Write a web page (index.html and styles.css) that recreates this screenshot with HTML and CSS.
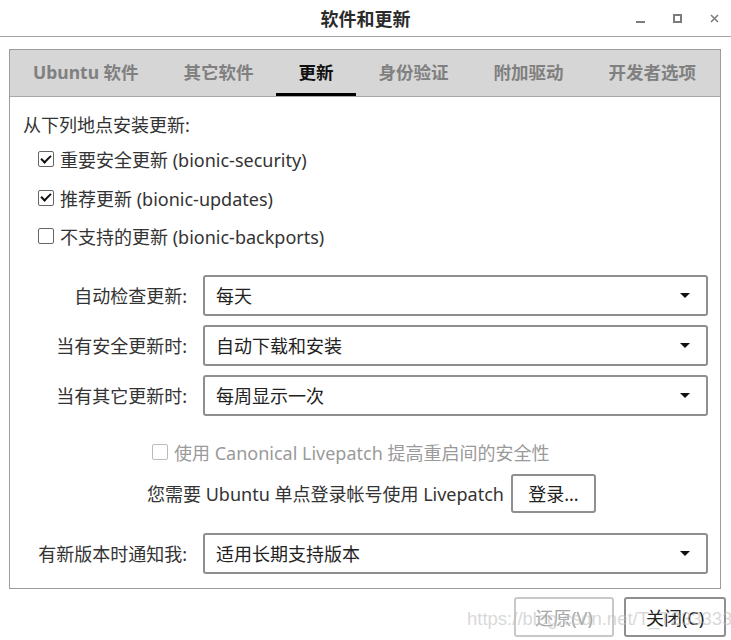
FILE: index.html
```html
<!DOCTYPE html>
<html lang="zh-CN">
<head>
    <meta charset="UTF-8">
    <title>软件和更新</title>
    <link rel="stylesheet" href="styles.css">
</head>
<body>
    <div class="window">
        <!-- 标题栏 -->
        <div class="titlebar">
            <span class="title">软件和更新</span>
            <div class="controls">
                <span class="ctl ctl-min"></span>
                <span class="ctl ctl-max"></span>
                <span class="ctl ctl-close">
                    <svg width="9" height="9" viewBox="0 0 9 9"><path d="M1 1L8 8M8 1L1 8" stroke="#7c7c7c" stroke-width="1.6"/></svg>
                </span>
            </div>
        </div>

        <div class="frame">
            <div class="tabs">
                <div class="tab">Ubuntu 软件</div>
                <div class="tab">其它软件</div>
                <div class="tab active">更新</div>
                <div class="tab">身份验证</div>
                <div class="tab">附加驱动</div>
                <div class="tab">开发者选项</div>
            </div>

            <div class="page">
                <div class="heading">从下列地点安装更新:</div>
                <div class="checks">
                    <label class="check"><span class="box checked"></span>重要安全更新 (bionic-security)</label>
                    <label class="check"><span class="box checked"></span>推荐更新 (bionic-updates)</label>
                    <label class="check"><span class="box"></span>不支持的更新 (bionic-backports)</label>
                </div>

                <div class="form">
                    <div class="label">自动检查更新:</div>
                    <div class="combo">每天<span class="arrow"></span></div>
                    <div class="label">当有安全更新时:</div>
                    <div class="combo">自动下载和安装<span class="arrow"></span></div>
                    <div class="label">当有其它更新时:</div>
                    <div class="combo">每周显示一次<span class="arrow"></span></div>
                </div>

                <label class="check livepatch"><span class="box"></span>使用 Canonical Livepatch 提高重启间的安全性</label>
                <div class="login-row">
                    <span>您需要 Ubuntu 单点登录帐号使用 Livepatch</span>
                    <button class="btn">登录...</button>
                </div>

                <div class="form notify">
                    <div class="label">有新版本时通知我:</div>
                    <div class="combo">适用长期支持版本<span class="arrow"></span></div>
                </div>
            </div>
        </div>

        <div class="actions">
            <button class="btn big" disabled>还原(V)</button>
            <button class="btn big">关闭(C)</button>
        </div>
        <div class="watermark">https://blog.csdn.net/T_T233333</div>
    </div>
</body>
</html>
```

FILE: styles.css
```css
body {
    margin: 0;
    background: #fff;
    font-family: "Noto Sans", "Noto Sans CJK SC", sans-serif;
    font-size: 18px;
    color: #333;
}

.window {
    position: relative;
    width: 731px;
    height: 640px;
    overflow: hidden;
}

/* 标题栏 */
.titlebar {
    height: 36px;
    border-bottom: 1px solid #a4a4a4;
    display: flex;
    align-items: center;
    justify-content: center;
    position: relative;
}

.title {
    font-weight: bold;
    font-size: 18px;
    color: #2b2b2b;
}

.controls {
    position: absolute;
    right: 12px;
    top: 0;
    height: 36px;
    display: flex;
    align-items: center;
    gap: 27px;
}

.ctl {
    width: 10px;
    height: 10px;
    display: flex;
    align-items: center;
    justify-content: center;
}

.ctl-min::after {
    content: "";
    width: 9px;
    height: 2px;
    background: #7c7c7c;
    margin-top: 8px;
}

.ctl-max::after {
    content: "";
    width: 5px;
    height: 5px;
    border: 2px solid #7c7c7c;
}

/* 标签页框 */
.frame {
    margin: 12px 10px 0 9px;
    border: 1px solid #9c9c9c;
    height: 538px;
}

.tabs {
    display: flex;
    height: 46px;
    background: #d6d6d6;
    border-bottom: 1px solid #a8a8a8;
    padding-left: 0.5px;
    overflow: hidden;
}

.tab {
    padding: 0 22.5px 3px;
    font-weight: bold;
    font-size: 17.5px;
    color: #808080;
    display: flex;
    align-items: center;
    position: relative;
    white-space: nowrap;
    flex-shrink: 0;
}

.tab.active {
    color: #111;
}

.tab.active::after {
    content: "";
    position: absolute;
    left: 0;
    right: 0;
    bottom: -1px;
    height: 4px;
    background: #000;
}

.page {
    padding: 13px 12px 0 13px;
}

.heading {
    height: 30px;
    line-height: 30px;
}

.checks {
    padding-left: 15px;
}

.check {
    display: flex;
    align-items: center;
    height: 38.5px;
}

.box {
    width: 14px;
    height: 14px;
    border: 1.5px solid #666;
    border-radius: 2px;
    margin-right: 6px;
    display: flex;
    align-items: center;
    justify-content: center;
    background: #fff;
}

.box.checked::after {
    content: "";
    width: 8px;
    height: 4px;
    border-left: 2.5px solid #111;
    border-bottom: 2.5px solid #111;
    transform: rotate(-45deg);
    margin-top: -3px;
}

/* 下拉框 */
.form {
    display: grid;
    grid-template-columns: 164px 1fr;
    column-gap: 16px;
    row-gap: 9px;
    margin-top: 19px;
}

.label {
    text-align: right;
    display: flex;
    align-items: center;
    justify-content: flex-end;
    white-space: nowrap;
}

.combo {
    height: 37px;
    border: 2px solid #8f8f8f;
    border-radius: 3px;
    display: flex;
    align-items: center;
    padding: 0 16px 0 11px;
    justify-content: space-between;
    color: #222;
}

.arrow {
    width: 0;
    height: 0;
    border-left: 5px solid transparent;
    border-right: 5px solid transparent;
    border-top: 5px solid #111;
}

.livepatch {
    margin: 17px 0 0 129px;
    height: 38px;
    color: #9a9a9a;
}

.livepatch .box {
    border-color: #bcbcbc;
}

.login-row {
    display: flex;
    align-items: center;
    margin: 3px 0 0 124px;
    gap: 7px;
}

.btn {
    font-family: "Noto Sans", "Noto Sans CJK SC", sans-serif;
    font-size: 18px;
    color: #222;
    background: #fff;
    border: 2px solid #8f8f8f;
    border-radius: 3px;
    height: 39px;
    width: 85px;
    padding: 0;
}

.notify {
    margin-top: 20px;
}

/* 底部按钮 */
.actions {
    display: flex;
    justify-content: flex-end;
    gap: 10px;
    padding: 8px 5px 0 0;
}

.btn.big {
    width: 102px;
    height: 40px;
}

.btn[disabled] {
    width: 100px;
    color: #a8a8a8;
    border-color: #c8c8c8;
}

.watermark {
    position: absolute;
    left: 467px;
    top: 608px;
    font-family: "Liberation Sans", sans-serif;
    font-size: 18.5px;
    color: rgba(190, 190, 190, 0.6);
    pointer-events: none;
}
```
